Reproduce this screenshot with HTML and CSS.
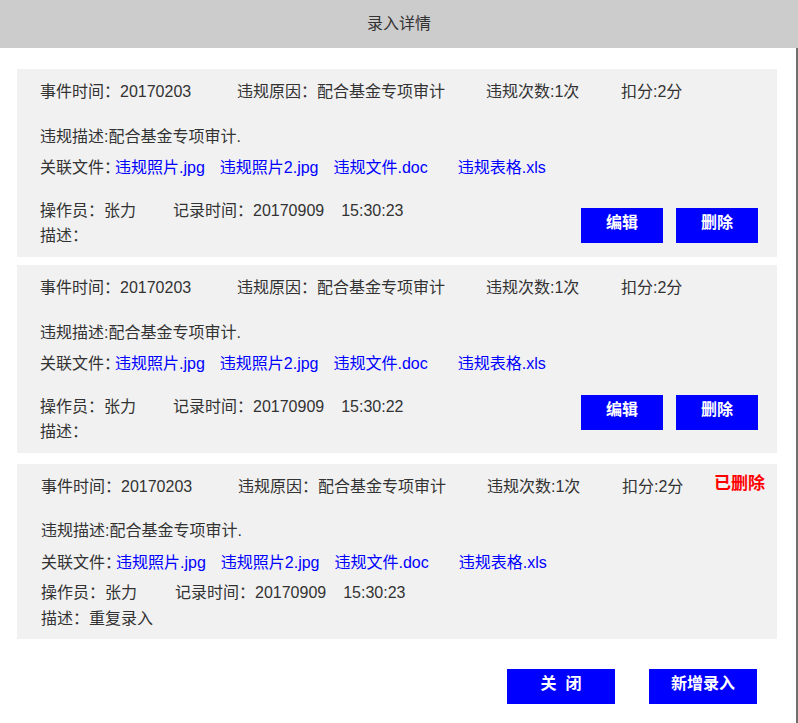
FILE: index.html
```html
<!DOCTYPE html>
<html lang="zh-CN">
<head>
<meta charset="utf-8">
<title>录入详情</title>
<link rel="stylesheet" href="styles.css">
</head>
<body>
<header class="dialog-header">录入详情</header>
<main class="dialog-body">
  <section class="record">
    <div class="row row-main">
      <span class="col col-time">事件时间：20170203</span>
      <span class="col col-reason">违规原因：配合基金专项审计</span>
      <span class="col col-count">违规次数:1次</span>
      <span class="col col-score">扣分:2分</span>
    </div>
    <div class="row row-desc">违规描述:配合基金专项审计.</div>
    <div class="row row-files"><span class="files-label">关联文件：</span><a class="file-link" href="#">违规照片.jpg</a><a class="file-link" href="#">违规照片2.jpg</a><a class="file-link" href="#">违规文件.doc</a><a class="file-link wide" href="#">违规表格.xls</a></div>
    <div class="record-foot">
      <div class="foot-info">
        <div class="row row-op"><span class="operator">操作员：张力</span><span class="rec-time">记录时间：20170909</span><span class="clock">15:30:23</span></div>
        <div class="row row-note">描述：</div>
      </div>
      <div class="actions">
        <button class="btn btn-small">编辑</button>
        <button class="btn btn-small">删除</button>
      </div>
    </div>
  </section>
  <section class="record second">
    <div class="row row-main">
      <span class="col col-time">事件时间：20170203</span>
      <span class="col col-reason">违规原因：配合基金专项审计</span>
      <span class="col col-count">违规次数:1次</span>
      <span class="col col-score">扣分:2分</span>
    </div>
    <div class="row row-desc">违规描述:配合基金专项审计.</div>
    <div class="row row-files"><span class="files-label">关联文件：</span><a class="file-link" href="#">违规照片.jpg</a><a class="file-link" href="#">违规照片2.jpg</a><a class="file-link" href="#">违规文件.doc</a><a class="file-link wide" href="#">违规表格.xls</a></div>
    <div class="record-foot">
      <div class="foot-info">
        <div class="row row-op"><span class="operator">操作员：张力</span><span class="rec-time">记录时间：20170909</span><span class="clock">15:30:22</span></div>
        <div class="row row-note">描述：</div>
      </div>
      <div class="actions">
        <button class="btn btn-small">编辑</button>
        <button class="btn btn-small">删除</button>
      </div>
    </div>
  </section>
  <section class="record deleted">
    <span class="deleted-badge">已删除</span>
    <div class="row row-main">
      <span class="col col-time">事件时间：20170203</span>
      <span class="col col-reason">违规原因：配合基金专项审计</span>
      <span class="col col-count">违规次数:1次</span>
      <span class="col col-score">扣分:2分</span>
    </div>
    <div class="row row-desc">违规描述:配合基金专项审计.</div>
    <div class="row row-files"><span class="files-label">关联文件：</span><a class="file-link" href="#">违规照片.jpg</a><a class="file-link" href="#">违规照片2.jpg</a><a class="file-link" href="#">违规文件.doc</a><a class="file-link wide" href="#">违规表格.xls</a></div>
    <div class="row row-op"><span class="operator">操作员：张力</span><span class="rec-time">记录时间：20170909</span><span class="clock">15:30:23</span></div>
    <div class="row row-note">描述：重复录入</div>
  </section>
  <div class="dialog-actions">
    <button class="btn btn-large">关&nbsp;&nbsp;闭</button>
    <button class="btn btn-large">新增录入</button>
  </div>
</main>
</body>
</html>
```
FILE: styles.css
```css
* { box-sizing: border-box; }
html, body { margin: 0; padding: 0; background: #ffffff; }
body {
  width: 798px;
  height: 723px;
  overflow: hidden;
  font-family: "Liberation Sans", "Noto Sans CJK SC", sans-serif;
  font-size: 16px;
  color: #333333;
}
.dialog-header {
  height: 48px;
  background: #cccccc;
  display: flex;
  align-items: center;
  justify-content: center;
  font-size: 16px;
  color: #333333;
  padding-bottom: 4px;
}
.dialog-body {
  width: 798px;
  height: 675px;
  border-right: 2px solid #6e6e6e;
  padding: 21px 0 0 17px;
  display: flex;
  flex-direction: column;
}
.record {
  position: relative;
  width: 760px;
  background: #f1f1f1;
  padding: 11px 19px 9px 23px;
  margin-bottom: 8px;
}
.record.deleted {
  margin-top: 3px;
  margin-bottom: 0;
  padding: 11px 19px 8px 24px;
}
.row {
  line-height: 24px;
  height: 24px;
  white-space: nowrap;
}
.row-main { display: flex; }
.col-time { width: 197px; }
.col-reason { width: 249px; }
.col-count { width: 135px; }
.row-desc { margin-top: 21px; }
.row-files { margin-top: 7px; display: flex; }
.files-label { display: inline-block; width: 75px; }
.file-link { color: #0000ff; text-decoration: none; }
.file-link + .file-link { margin-left: 15px; }
.file-link.wide { margin-left: 30px; }
.record-foot {
  display: flex;
  justify-content: space-between;
  align-items: flex-start;
  margin-top: 19px;
}
.row-op { display: flex; }
.row-note { margin-top: 1px; }
.operator { margin-right: 37px; }
.rec-time { margin-right: 17px; }
.actions {
  display: flex;
  gap: 13px;
  margin-top: 9px;
}
.second .actions { margin-top: 0; }
.btn {
  border: 0;
  background: #0000ff;
  color: #ffffff;
  font-family: "Liberation Sans", "Noto Sans CJK SC", sans-serif;
  font-weight: bold;
  font-size: 16px;
  padding: 0 0 5px 0;
  line-height: 20px;
  cursor: pointer;
}
.btn-small { width: 82px; height: 35px; }
.btn-large { width: 108px; height: 35px; }
.deleted .row-desc { margin-top: 20px; }
.deleted .row-files { margin-top: 8px; }
.deleted .row-op { margin-top: 6px; }
.deleted .row-note { margin-top: 2px; }
.deleted .operator { margin-right: 38px; }
.deleted-badge {
  position: absolute;
  top: 10px;
  right: 12px;
  line-height: 20px;
  color: #ff0000;
  font-weight: bold;
  font-size: 17px;
}
.dialog-actions {
  display: flex;
  justify-content: flex-end;
  gap: 34px;
  margin-top: 30px;
  width: 760px;
  padding-right: 20px;
}
```
